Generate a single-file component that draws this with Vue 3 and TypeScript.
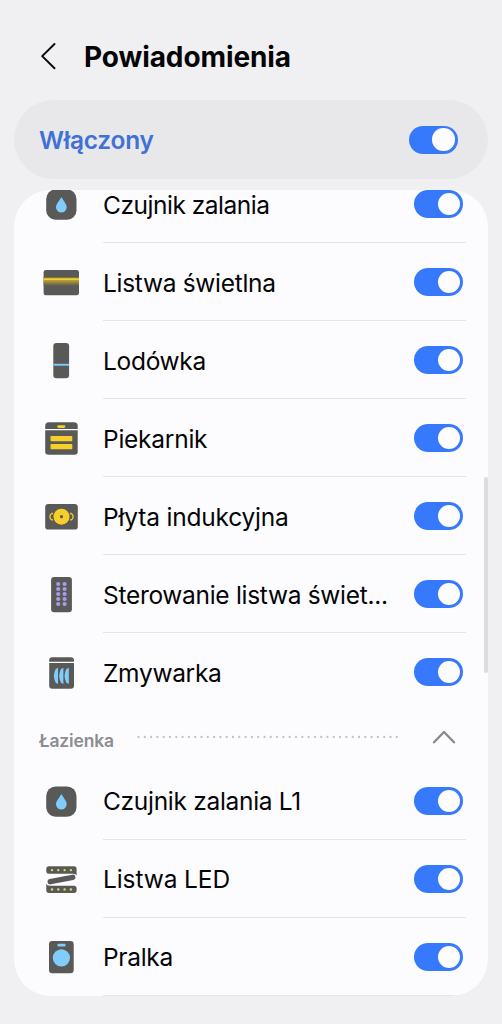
<script setup lang="ts">
type IconName =
  | 'leak' | 'strip' | 'fridge' | 'oven' | 'hob'
  | 'remote' | 'dishwasher' | 'led' | 'washer'

interface Device {
  name: string
  icon: IconName
  spacing: number
}

interface Section {
  title?: string
  devices: Device[]
}

const sections: Section[] = [
  {
    devices: [
      { name: 'Czujnik zalania', icon: 'leak', spacing: -0.48 },
      { name: 'Listwa świetlna', icon: 'strip', spacing: -0.3 },
      { name: 'Lodówka', icon: 'fridge', spacing: -0.3 },
      { name: 'Piekarnik', icon: 'oven', spacing: -0.25 },
      { name: 'Płyta indukcyjna', icon: 'hob', spacing: -0.2 },
      { name: 'Sterowanie listwa świet...', icon: 'remote', spacing: -0.3 },
      { name: 'Zmywarka', icon: 'dishwasher', spacing: -0.3 },
    ],
  },
  {
    title: 'Łazienka',
    devices: [
      { name: 'Czujnik zalania L1', icon: 'leak', spacing: -0.3 },
      { name: 'Listwa LED', icon: 'led', spacing: -0.1 },
      { name: 'Pralka', icon: 'washer', spacing: -0.3 },
    ],
  },
]

const remoteRows = [10, 15, 20, 25, 30]
const ledDots = [11, 17.3, 23.6, 29.9]
</script>

<template>
  <main class="screen">
    <header class="header">
      <svg class="back" viewBox="0 0 20 30">
        <path d="M15.5 3 L3.2 15.1 L15.5 27.2" />
      </svg>
      <h1 class="title">Powiadomienia</h1>
    </header>

    <section class="master">
      <span class="master-label">Włączony</span>
      <span class="toggle"><span class="knob"></span></span>
    </section>

    <section class="card">
      <div class="list">
        <template v-for="(section, i) in sections" :key="i">
          <div v-if="section.title" class="section-head">
            <span class="section-title">{{ section.title }}</span>
            <svg class="dots" viewBox="0 0 262 4">
              <path d="M1.5 2 H261" />
            </svg>
            <svg class="chevron" viewBox="0 0 24 16">
              <path d="M2 13.3 L12 3 L22 13.3" />
            </svg>
          </div>
          <div
            v-for="device in section.devices"
            :key="device.name"
            class="row"
            :class="{ untitled: !section.title }"
          >
            <svg class="icon" viewBox="0 0 40 40">
              <g v-if="device.icon === 'leak'">
                <rect class="body" x="5.2" y="5.4" width="30.3" height="30.3" rx="9.5" />
                <path class="blue" d="M20.4 13 C18.6 16.5 15 20 15 23.2 A5.3 5.2 0 0 0 25.7 23.2 C25.7 20 22.2 16.5 20.4 13Z" />
              </g>
              <g v-else-if="device.icon === 'strip'">
                <defs>
                  <linearGradient id="strip-glow" x1="0" y1="0" x2="0" y2="1">
                    <stop offset="0" stop-color="#e5c531" />
                    <stop offset="0.35" stop-color="#bda132" />
                    <stop offset="1" stop-color="#585856" />
                  </linearGradient>
                </defs>
                <rect class="body" x="2.6" y="8" width="35.4" height="25.2" rx="2.3" />
                <rect x="2.6" y="15" width="35.4" height="9" fill="url(#strip-glow)" />
                <rect x="2.6" y="15" width="35.4" height="1.5" fill="#827334" />
                <rect x="2.6" y="16.3" width="35.4" height="1.7" fill="#efd034" />
              </g>
              <g v-else-if="device.icon === 'fridge'">
                <rect class="body" x="12.3" y="3" width="15.8" height="35.2" rx="3.2" />
                <rect class="blue" x="12.3" y="23.8" width="15.8" height="1.9" />
              </g>
              <g v-else-if="device.icon === 'oven'">
                <path class="body" d="M4.2 11 V8 Q4.2 4.3 8 4.3 H33 Q36.7 4.3 36.7 8 V11Z" />
                <path class="body" d="M4.2 12.3 H36.7 V33.4 Q36.7 36.7 33.4 36.7 H7.5 Q4.2 36.7 4.2 33.4Z" />
                <rect class="yellow" x="16.3" y="7.2" width="8" height="2.8" rx="1.4" />
                <rect class="yellow" x="9.5" y="18" width="21.8" height="5.2" rx="0.8" />
                <rect class="yellow" x="9.5" y="26" width="21.8" height="5.2" rx="0.8" />
              </g>
              <g v-else-if="device.icon === 'hob'">
                <rect class="body" x="4.2" y="8" width="32.6" height="25.6" rx="3.2" />
                <circle class="yellow" cx="20.5" cy="20.7" r="8" />
                <path class="handle" d="M12 17.5 H10.8 C8.3 18.4 8.3 23 10.8 23.9 H12" />
                <path class="handle" d="M29 17.5 H30.2 C32.7 18.4 32.7 23 30.2 23.9 H29" />
                <circle class="body" cx="20.5" cy="20.7" r="1.6" />
              </g>
              <g v-else-if="device.icon === 'remote'">
                <rect class="body" x="10.1" y="3" width="20.8" height="35.2" rx="3" />
                <template v-for="y in remoteRows" :key="y">
                  <circle class="violet" cx="17.2" :cy="y" r="2.1" />
                  <circle class="violet" cx="23.6" :cy="y" r="2.1" />
                </template>
              </g>
              <g v-else-if="device.icon === 'dishwasher'">
                <path class="body" d="M8.2 9.8 V8.5 Q8.2 5.2 11.5 5.2 H29.7 Q33 5.2 33 8.5 V9.8Z" />
                <path class="body" d="M8.2 11.1 H33 V33.6 Q33 36.8 29.8 36.8 H11.4 Q8.2 36.8 8.2 33.6Z" />
                <path class="blue" d="M17 15.8 V32 L14.7 30.8 Q11 24 14.7 17Z" />
                <path class="blue" d="M22.4 15.8 V32 L20 30.8 Q16.3 24 20 17Z" />
                <path class="blue" d="M27.8 15.8 V32 L25.4 30.8 Q21.7 24 25.4 17Z" />
              </g>
              <g v-else-if="device.icon === 'led'">
                <path class="body" d="M8 7.3 H33 Q35.6 7.3 35.6 10 V16.5 Q34.8 14.8 32.5 14.8 H8 Q5.3 14.8 5.3 12.3 V10 Q5.3 7.3 8 7.3Z" />
                <path class="body" d="M5.3 24.5 Q6 26.7 8.5 26.7 H33 Q35.6 26.7 35.6 29.2 V31.3 Q35.6 34 33 34 H8 Q5.3 34 5.3 31.3Z" />
                <path class="band" d="M9.3 22.7 L31.7 18.3" />
                <template v-for="x in ledDots" :key="x">
                  <circle class="lamp" :cx="x" cy="11.1" r="1.2" />
                  <circle class="lamp" :cx="x" cy="30.4" r="1.2" />
                </template>
              </g>
              <g v-else>
                <rect class="body" x="8" y="4" width="24.7" height="32.2" rx="3.2" />
                <rect class="blue" x="16.5" y="6.8" width="8" height="2.6" rx="0.7" />
                <circle class="blue" cx="20.4" cy="20.9" r="8.6" />
              </g>
            </svg>
            <div class="row-main">
              <span class="name" :style="{ letterSpacing: device.spacing + 'px' }">{{ device.name }}</span>
              <span class="toggle"><span class="knob"></span></span>
            </div>
          </div>
        </template>
      </div>
      <span class="scroll-thumb"></span>
    </section>
  </main>
</template>

<style>
html,
body {
  background: #f0f0f2;
}
</style>

<style scoped>
.screen {
  box-sizing: border-box;
  height: 1024px;
  padding: 0 14px;
  overflow: hidden;
  background: #f0f0f2;
  font-family: Inter, Roboto, "Liberation Sans", sans-serif;
  color: #050507;
}
.header {
  display: flex;
  align-items: center;
  height: 100px;
  padding: 13px 0 0 25px;
  box-sizing: border-box;
}
.back {
  width: 20px;
  height: 30px;
  margin-top: -1px;
}
.back path {
  fill: none;
  stroke: #0a0a0c;
  stroke-width: 2;
  stroke-linecap: round;
  stroke-linejoin: round;
}
.title {
  margin: 0 0 0 25px;
  font-size: 28px;
  line-height: 36px;
  font-weight: 700;
  letter-spacing: -0.1px;
}
.master {
  display: flex;
  align-items: center;
  justify-content: space-between;
  box-sizing: border-box;
  height: 79px;
  padding: 0 30.5px 0 25px;
  border-radius: 40px;
  background: #e8e8ea;
}
.master-label {
  color: #3f71d6;
  font-size: 24.5px;
  font-weight: 600;
  line-height: 32px;
  letter-spacing: -0.25px;
}
.toggle {
  display: flex;
  flex: none;
  justify-content: flex-end;
  align-items: center;
  box-sizing: border-box;
  width: 49px;
  height: 28px;
  padding-right: 3px;
  border-radius: 14px;
  background: #3779fc;
}
.knob {
  width: 22.5px;
  height: 22.5px;
  border-radius: 50%;
  background: #fdfdff;
}
.card {
  position: relative;
  height: 806px;
  margin-top: 11px;
  border-radius: 37px;
  overflow: hidden;
  background: #fcfcfe;
}
.list {
  margin-top: -25px;
}
.row {
  display: flex;
  height: 78px;
  padding: 0 22px 0 27px;
}
.icon {
  flex: none;
  width: 40px;
  height: 40px;
  margin-top: 19px;
}
.row-main {
  display: flex;
  flex: 1;
  align-items: center;
  justify-content: space-between;
  box-sizing: border-box;
  height: 78px;
  margin-left: 22px;
  padding: 1px 3px 0 0;
  border-bottom: 1px solid #e5e5e7;
}
.row:has(+ .section-head) .row-main {
  border-bottom-color: transparent;
}
.name {
  font-size: 24.5px;
  line-height: 34px;
  white-space: nowrap;
}
.untitled .name {
  padding-top: 2px;
}
.section-head {
  display: flex;
  align-items: center;
  height: 51px;
  padding: 0 32.5px 0 25px;
}
.section-title {
  width: 98px;
  padding-top: 7px;
  color: #8d8d90;
  font-size: 17.5px;
  font-weight: 600;
  letter-spacing: -0.15px;
}
.dots {
  width: 262px;
  height: 4px;
}
.dots path {
  fill: none;
  stroke: #c3c3c6;
  stroke-width: 2.3;
  stroke-linecap: round;
  stroke-dasharray: 0 6.3;
}
.chevron {
  width: 24px;
  height: 16px;
  margin-left: auto;
}
.chevron path {
  fill: none;
  stroke: #88888a;
  stroke-width: 2.3;
  stroke-linecap: round;
  stroke-linejoin: round;
}
.scroll-thumb {
  position: absolute;
  top: 287px;
  right: 0;
  width: 4px;
  height: 196px;
  border-radius: 2px;
  background: #dcdcde;
}
.body { fill: #595958; }
.blue { fill: #80ccfb; }
.yellow { fill: #f7cf2b; }
.violet { fill: #a99be6; }
.lamp { fill: #e5dc50; }
.handle {
  fill: none;
  stroke: #f7cf2b;
  stroke-width: 1.3;
}
.band {
  fill: none;
  stroke: #595958;
  stroke-width: 5.4;
  stroke-linecap: round;
}
</style>
